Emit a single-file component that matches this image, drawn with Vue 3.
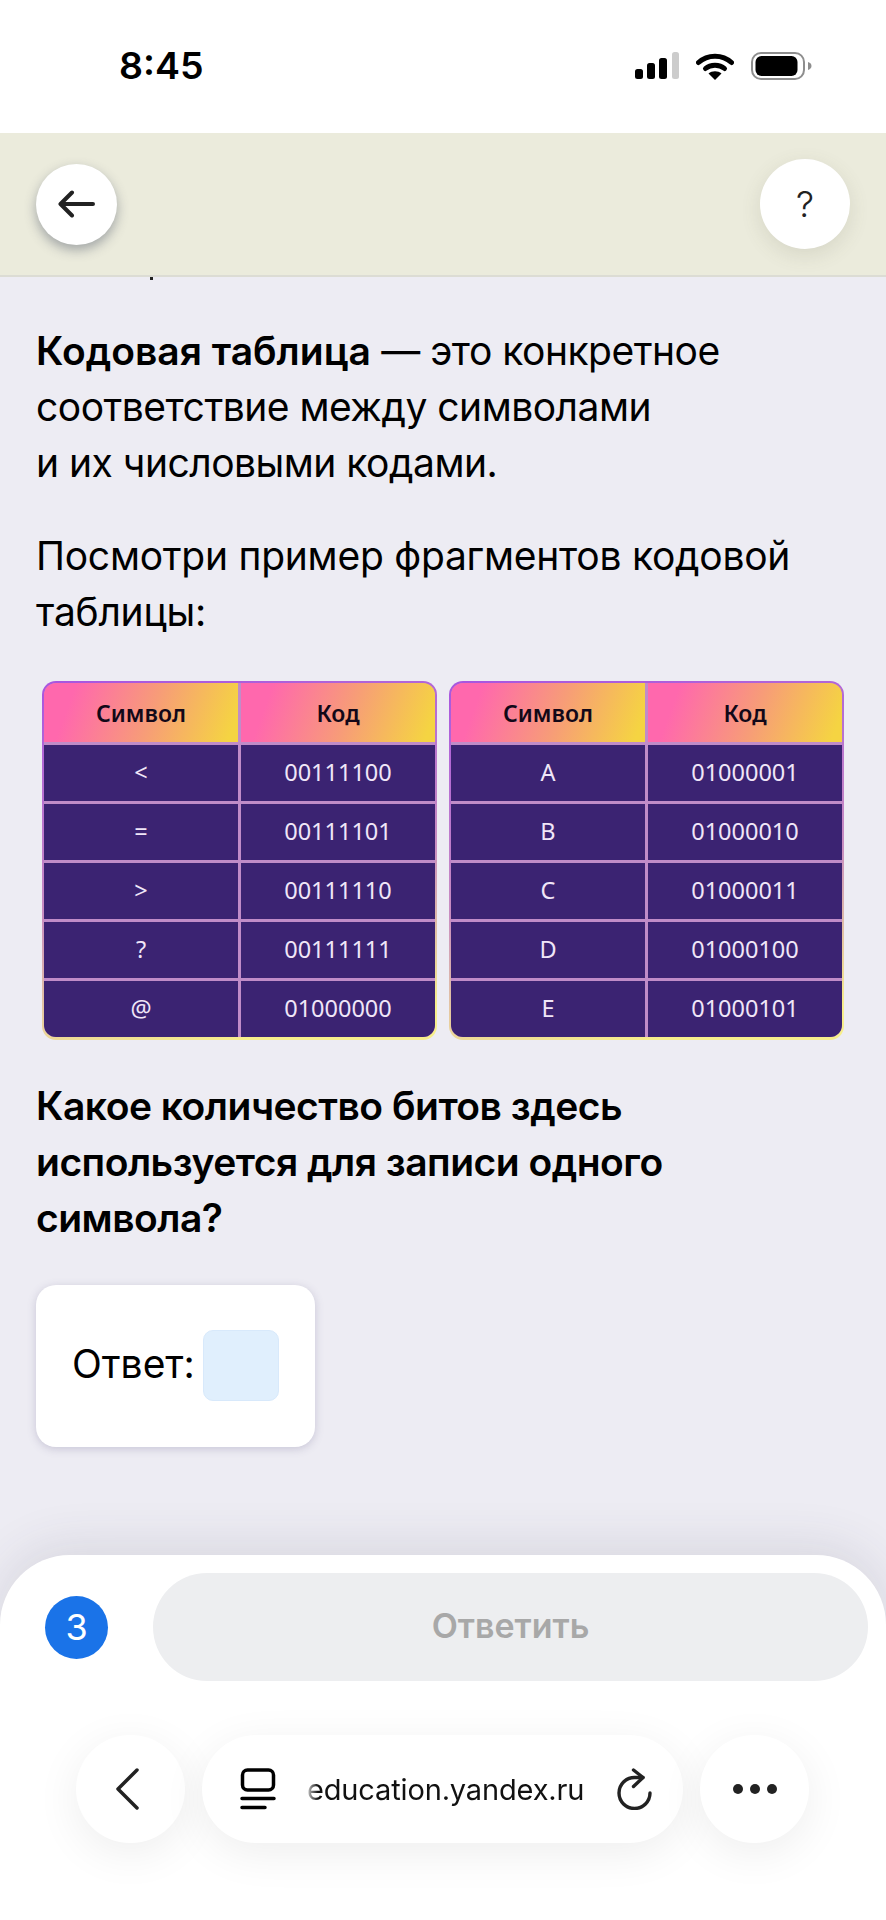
<template>
  <div class="page">
    <div class="status">
      <span class="time">8:45</span>
      <div class="status-icons">
        <svg class="signal" width="44" height="27" viewBox="0 0 44 27">
          <rect x="0" y="17" width="8" height="10" rx="2.5" fill="#000" />
          <rect x="12" y="11" width="8" height="16" rx="2.5" fill="#000" />
          <rect x="24" y="6" width="8" height="21" rx="2.5" fill="#000" />
          <rect x="37" y="0" width="7" height="27" rx="2.5" fill="#ccc" />
        </svg>
        <svg class="wifi" width="38" height="28" viewBox="0 0 38 28">
          <path d="M2.5 10.5C11.5 2 26.5 2 35.5 10.5" fill="none" stroke="#000" stroke-width="5" stroke-linecap="round" />
          <path d="M9.5 16.5C14.5 12 23.5 12 28.5 16.5" fill="none" stroke="#000" stroke-width="5" stroke-linecap="round" />
          <path d="M12.5 21.5C16 18.5 22 18.5 25.5 21.5L19 28Z" fill="#000" />
        </svg>
        <svg class="battery" width="61" height="28" viewBox="0 0 61 28">
          <rect x="1" y="1" width="52" height="26" rx="9" fill="none" stroke="#8e8e8e" stroke-width="2" />
          <rect x="4.500" y="4" width="42" height="20" rx="6" fill="#000" />
          <path d="M57 10c2.500.8 3.500 2.200 3.500 4s-1 3.200-3.500 4z" fill="#8e8e8e" />
        </svg>
      </div>
    </div>

    <header class="topbar">
      <button class="round back">
        <svg width="38" height="28" viewBox="0 0 38 28">
          <path d="M35 14H3M14 2.500L2.500 14L14 25.500" fill="none" stroke="#222" stroke-width="4" stroke-linecap="round" stroke-linejoin="round" />
        </svg>
      </button>
      <button class="round help">?</button>
    </header>

    <main class="content">
      <div class="cut-line"></div>
      <p class="lead first"><b>Кодовая таблица</b> — это конкретное<br />соответствие между символами<br />и их числовыми кодами.</p>
      <p class="lead second">Посмотри пример фрагментов кодовой<br />таблицы:</p>

      <div class="tables">
        <div v-for="(t, i) in tables" :key="i" class="table">
          <div class="grid">
            <div class="th">Символ</div>
            <div class="th">Код</div>
            <template v-for="row in t" :key="row[1]">
              <div class="td">{{ row[0] }}</div>
              <div class="td">{{ row[1] }}</div>
            </template>
          </div>
        </div>
      </div>

      <p class="lead question"><b>Какое количество битов здесь<br />используется для записи одного<br />символа?</b></p>

      <div class="answer">
        <span class="answer-label">Ответ:</span>
        <div class="answer-input"></div>
      </div>
    </main>

    <div class="sheet">
      <div class="sheet-row">
        <div class="count">3</div>
        <button class="submit">Ответить</button>
      </div>
      <div class="browser">
        <button class="pill circle">
          <svg class="chevron" width="24" height="42" viewBox="0 0 24 42">
            <path d="M22 2L3 21L22 40" fill="none" stroke="#222" stroke-width="3.500" stroke-linecap="round" stroke-linejoin="round" />
          </svg>
        </button>
        <div class="pill address">
          <svg width="36" height="42" viewBox="0 0 36 42">
            <rect x="2.500" y="2" width="31" height="20" rx="5" fill="none" stroke="#000" stroke-width="3.500" />
            <path d="M2 30.500H34M2 39.500H25" stroke="#000" stroke-width="3.500" stroke-linecap="round" />
          </svg>
          <div class="url">education.yandex.ru</div>
          <svg width="38" height="42" viewBox="0 0 38 42">
            <path d="M29 9.500H20.500A15.500 15.500 0 1 0 36 25" fill="none" stroke="#222" stroke-width="3.400" stroke-linecap="round" />
            <path d="M19.500 2L29 9.500L19.500 18.500" fill="none" stroke="#222" stroke-width="3.400" stroke-linecap="round" stroke-linejoin="round" />
          </svg>
        </div>
        <button class="pill circle">
          <svg width="46" height="12" viewBox="0 0 46 12">
            <circle cx="6" cy="6" r="5" fill="#222" />
            <circle cx="23" cy="6" r="5" fill="#222" />
            <circle cx="40" cy="6" r="5" fill="#222" />
          </svg>
        </button>
      </div>
    </div>
  </div>
</template>

<script setup>
const tables = [
  [
    ['<', '00111100'],
    ['=', '00111101'],
    ['>', '00111110'],
    ['?', '00111111'],
    ['@', '01000000'],
  ],
  [
    ['A', '01000001'],
    ['B', '01000010'],
    ['C', '01000011'],
    ['D', '01000100'],
    ['E', '01000101'],
  ],
]
</script>

<style>
html,
body {
  margin: 0;
  background: #fff;
}
</style>

<style scoped>
.page {
  width: 886px;
  height: 1920px;
  display: flex;
  flex-direction: column;
  overflow: hidden;
  font-family: Inter, "Noto Sans", sans-serif;
  color: #000;
  background: #edecf3;
}

button {
  border: 0;
  padding: 0;
  font-family: inherit;
  cursor: pointer;
}

.status {
  height: 133px;
  flex: none;
  display: flex;
  justify-content: space-between;
  background: #fff;
  padding: 0 74px 0 119px;
  box-sizing: border-box;
}
.time {
  font-size: 37.500px;
  font-weight: 600;
  line-height: 46px;
  margin-top: 43px;
}
.status-icons {
  display: flex;
  align-items: flex-start;
  padding-top: 52px;
}
.wifi {
  margin-left: 17px;
}
.battery {
  margin-left: 17px;
}

.topbar {
  height: 144px;
  flex: none;
  box-sizing: border-box;
  display: flex;
  align-items: center;
  justify-content: space-between;
  padding: 0 36px;
  background: #ebebdc;
  border-bottom: 2px solid #dcdcd4;
}
.round {
  border-radius: 50%;
  background: #fff;
  display: flex;
  align-items: center;
  justify-content: center;
}
.back {
  width: 81px;
  height: 81px;
  box-shadow: 0 5px 12px rgba(70, 80, 100, 0.45);
}
.help {
  width: 90px;
  height: 90px;
  font-size: 36px;
  font-weight: 300;
  color: #222;
  box-shadow: 0 6px 20px rgba(90, 90, 70, 0.14);
}

.content {
  flex: 1;
  min-height: 0;
  overflow: hidden;
}
.cut-line {
  width: 3px;
  height: 3px;
  margin-left: 150px;
  background: #222;
}
.lead {
  margin: 43px 36px 0;
  font-size: 39px;
  line-height: 56px;
  letter-spacing: -0.5px;
}
.lead b {
  font-weight: 600;
}
.lead.first b {
  letter-spacing: 0;
}
.lead.second {
  margin-top: 37px;
  letter-spacing: -0.25px;
}
.lead.question {
  margin-top: 38px;
}

.tables {
  display: flex;
  gap: 12px;
  margin: 41px 42px 0;
}
.table {
  flex: 1;
  padding: 2px 2px 3px;
  border-radius: 14px;
  background: linear-gradient(170deg, #a855e0, #c98ec0 55%, #f7ee8c 92%);
}
.grid {
  display: grid;
  grid-template-columns: 1fr 1fr;
  grid-auto-rows: 56px;
  grid-template-rows: 59px;
  gap: 3px;
  border-radius: 12px;
  overflow: hidden;
  background: #c08cc8;
  font-family: "Noto Sans", sans-serif;
  font-size: 23.500px;
}
.th,
.td {
  display: flex;
  align-items: center;
  justify-content: center;
}
.th {
  font-size: 23px;
  font-weight: 600;
  color: #120818;
  background: linear-gradient(110deg, #ff68ad 15%, #f79c78 55%, #f5d442 95%);
}
.td {
  padding-bottom: 2px;
  background: #3b2372;
  color: #f0e6f8;
}

.answer {
  margin: 39px 0 0 36px;
  width: 279px;
  height: 162px;
  box-sizing: border-box;
  padding: 0 36px;
  display: flex;
  align-items: center;
  gap: 8px;
  background: #fff;
  border-radius: 20px;
  box-shadow: 0 2px 8px rgba(90, 85, 130, 0.25);
  font-size: 39px;
}
.answer-label {
  margin-bottom: 5px;
}
.answer-input {
  width: 76px;
  height: 71px;
  flex: none;
  margin-top: -2px;
  background: #e0effd;
  border: 1px solid #d8e9fb;
  box-sizing: border-box;
  border-radius: 10px;
}

.sheet {
  height: 365px;
  flex: none;
  box-sizing: border-box;
  padding-top: 18px;
  background: #fff;
  border-radius: 70px 70px 0 0;
  box-shadow: 0 -8px 50px rgba(60, 60, 80, 0.12);
}
.sheet-row {
  display: flex;
  align-items: center;
  padding: 0 18px 0 45px;
}
.count {
  width: 63px;
  height: 63px;
  flex: none;
  border-radius: 50%;
  background: #1a73e8;
  color: #fff;
  font-size: 36px;
  display: flex;
  align-items: center;
  justify-content: center;
}
.submit {
  margin-left: 45px;
  flex: 1;
  height: 108px;
  padding-bottom: 3px;
  border-radius: 54px;
  background: #edeef0;
  color: #a8a8a8;
  font-size: 34px;
  font-weight: 600;
}

.browser {
  display: flex;
  gap: 17px;
  margin-top: 54px;
  padding: 0 77px 0 76px;
}
.pill {
  height: 108px;
  background: #fff;
  border-radius: 54px;
  box-shadow: 0 10px 45px rgba(0, 0, 0, 0.07);
  display: flex;
  align-items: center;
}
.circle {
  width: 109px;
  flex: none;
  justify-content: center;
}
.chevron {
  margin-right: 7px;
}
.address {
  flex: 1;
  min-width: 0;
  padding: 0 31px 0 38px;
  gap: 28px;
}
.url {
  flex: 1;
  min-width: 0;
  padding-left: 3px;
  font-size: 29px;
  letter-spacing: -0.15px;
  color: #111;
  white-space: nowrap;
  overflow: hidden;
  -webkit-mask-image: linear-gradient(90deg, transparent 0, #000 14px);
  mask-image: linear-gradient(90deg, transparent 0, #000 14px);
}
</style>
